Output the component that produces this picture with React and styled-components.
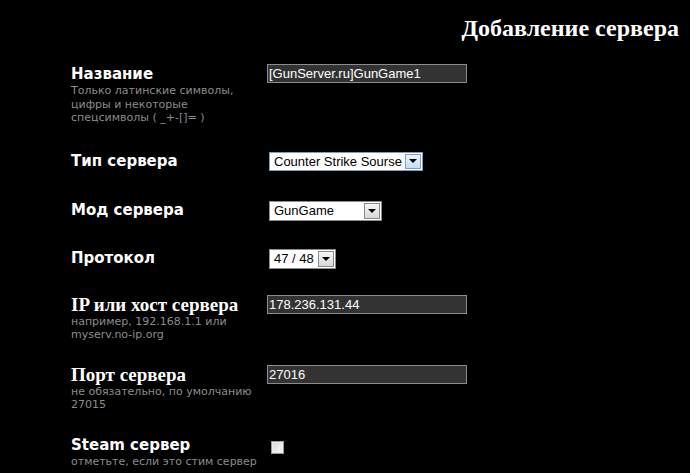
import React from "react";
import styled, { createGlobalStyle } from "styled-components";

const GlobalStyle = createGlobalStyle`
  html, body {
    margin: 0;
    padding: 0;
    background: #000;
  }
`;

const Page = styled.div`
  width: 690px;
  height: 473px;
  overflow: hidden;
  background: #000;
  color: #fff;
`;

const Title = styled.h1`
  margin: 0;
  padding: 14px 11px 0 0;
  text-align: right;
  font-family: "Liberation Serif", "Times New Roman", serif;
  font-weight: bold;
  font-size: 24px;
  line-height: 28px;
  color: #fff;
`;

const Form = styled.div`
  display: flex;
  flex-direction: column;
  padding: 22px 0 0 71px;
`;

const Row = styled.div`
  display: grid;
  grid-template-columns: 196px 1fr;
  align-items: start;
  padding-bottom: ${(p) => p.$gap || 30}px;
`;

const LabelCol = styled.div`
  display: flex;
  flex-direction: column;
`;

const Label = styled.div`
  font-family: ${(p) =>
    p.$serif
      ? `"Liberation Serif", "Times New Roman", serif`
      : `"DejaVu Sans", Verdana, sans-serif`};
  font-weight: bold;
  font-size: ${(p) => (p.$serif ? "19px" : "15px")};
  line-height: 18px;
  color: #fff;
  padding-top: ${(p) => p.$pt || 0}px;
`;

const Hint = styled.div`
  font-family: "DejaVu Sans", Verdana, sans-serif;
  font-size: 11px;
  line-height: 13.5px;
  color: #8c8c8c;
  width: 190px;
  padding-top: 1px;
`;

const TextInput = styled.div`
  box-sizing: border-box;
  width: 200px;
  height: 19px;
  background: #333;
  border: 1px solid #8c8c8c;
  color: #fff;
  font-family: "Liberation Sans", Arial, sans-serif;
  font-size: 13px;
  line-height: 17px;
  padding-left: 1px;
  white-space: nowrap;
  overflow: hidden;
`;

const Select = styled.div`
  box-sizing: border-box;
  margin-left: 2px;
  width: ${(p) => p.$w}px;
  height: ${(p) => p.$h || 20}px;
  background: #fff;
  border: 1px solid ${(p) => (p.$active ? "#7f9db9" : "#8c8c8c")};
  display: flex;
  align-items: stretch;
  padding: 1px;
`;

const SelectText = styled.div`
  flex: 1;
  font-family: "Liberation Sans", Arial, sans-serif;
  font-size: 13px;
  line-height: 15px;
  color: #000;
  padding-left: 3px;
  white-space: nowrap;
  overflow: hidden;
`;

const Arrow = styled.div`
  box-sizing: border-box;
  width: 16px;
  border: 1px solid ${(p) => (p.$active ? "#7da2ce" : "#8a8a8a")};
  background: ${(p) =>
    p.$active
      ? "linear-gradient(#eef4fd, #c6dcf6)"
      : "linear-gradient(#f6f6f6, #d8d8d8)"};
  display: flex;
  align-items: center;
  justify-content: center;
`;

const Tri = styled.div`
  width: 0;
  height: 0;
  border-left: 4px solid transparent;
  border-right: 4px solid transparent;
  border-top: 4px solid #000;
`;

const Checkbox = styled.div`
  box-sizing: border-box;
  margin: 6px 0 0 4px;
  width: 13px;
  height: 13px;
  border: 1px solid #9a9a9a;
  background: linear-gradient(135deg, #d8d8d8, #f8f8f8);
  box-shadow: inset 0 0 0 1px #ececec;
`;

const SelectBox = ({ w, h, value, active }) => (
  <Select $w={w} $h={h} $active={active}>
    <SelectText>{value}</SelectText>
    <Arrow $active={active}>
      <Tri />
    </Arrow>
  </Select>
);

const App = () => {
  return (
    <Page>
      <GlobalStyle />
      <Title>Добавление сервера</Title>
      <Form>
        <Row $gap={27}>
          <LabelCol>
            <Label $pt={1}>Название</Label>
            <Hint>
              Только латинские символы, цифры и некоторые спецсимволы ( _+-[]= )
            </Hint>
          </LabelCol>
          <TextInput>[GunServer.ru]GunGame1</TextInput>
        </Row>
        <Row $gap={30}>
          <Label>Тип сервера</Label>
          <SelectBox w={154} h={19} value="Counter Strike Sourse" active />
        </Row>
        <Row $gap={28}>
          <Label>Мод сервера</Label>
          <SelectBox w={113} value="GunGame" />
        </Row>
        <Row $gap={26}>
          <Label>Протокол</Label>
          <SelectBox w={67} value="47 / 48" />
        </Row>
        <Row $gap={23}>
          <LabelCol>
            <Label $serif $pt={1}>IP или хост сервера</Label>
            <Hint>например, 192.168.1.1 или myserv.no-ip.org</Hint>
          </LabelCol>
          <TextInput>178.236.131.44</TextInput>
        </Row>
        <Row $gap={23}>
          <LabelCol>
            <Label $serif $pt={1}>Порт сервера</Label>
            <Hint>не обязательно, по умолчанию 27015</Hint>
          </LabelCol>
          <TextInput>27016</TextInput>
        </Row>
        <Row>
          <LabelCol>
            <Label $pt={1}>Steam сервер</Label>
            <Hint>отметьте, если это стим сервер</Hint>
          </LabelCol>
          <Checkbox />
        </Row>
      </Form>
    </Page>
  );
};

export default App;
